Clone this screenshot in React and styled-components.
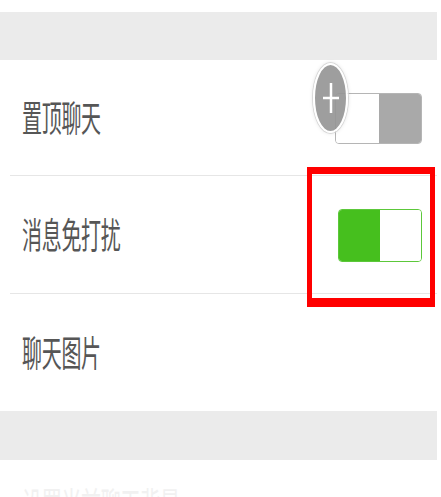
import React from "react";
import styled, { createGlobalStyle } from "styled-components";

const Global = createGlobalStyle`
  html, body { margin: 0; padding: 0; background: #ffffff; }
  body { font-family: "Noto Sans CJK SC", "Noto Sans", sans-serif; }
  #root { width: 441px; height: 497px; overflow: hidden; }
`;

const Page = styled.div`
  width: 437px;
  padding-top: 12px;
  background: #ffffff;
  display: flex;
  flex-direction: column;
`;

const GrayBand = styled.div`
  height: ${(p) => p.$h}px;
  background: #ebebeb;
`;

const Row = styled.div`
  position: relative;
  height: ${(p) => p.$h}px;
  display: flex;
  align-items: center;
  justify-content: space-between;
  padding: 0 15px 0 22px;
  box-sizing: border-box;
  background: #ffffff;
  &::after {
    content: "";
    display: ${(p) => (p.$line ? "block" : "none")};
    position: absolute;
    left: 10px;
    right: 0;
    bottom: 0;
    height: 1px;
    background: #e6e6e6;
  }
`;

const Label = styled.span`
  display: inline-block;
  font-size: 20px;
  line-height: 20px;
  color: ${(p) => (p.$faint ? "#f1f1f1" : "#565656")};
  letter-spacing: -0.3px;
  transform: scaleY(1.8);
  transform-origin: center;
`;

const FaintRow = styled.div`
  height: 60px;
  padding: 34px 0 0 22px;
  box-sizing: border-box;
`;

const Track = styled.div`
  width: ${(p) => p.$w}px;
  height: ${(p) => p.$h}px;
  display: flex;
  border-radius: 4px;
  overflow: hidden;
  box-sizing: border-box;
  border: 1px solid ${(p) => (p.$on ? "#5cc83a" : "#b5b5b5")};
  background: #ffffff;
`;

const Half = styled.div`
  flex: 1;
  background: ${(p) => p.$fill};
`;

const PlusCircle = styled.div`
  position: absolute;
  z-index: 2;
  left: 313px;
  top: 3px;
  width: 35px;
  height: 70px;
  border-radius: 50%;
  box-sizing: border-box;
  border: 2px solid #ffffff;
  background: rgba(150, 150, 150, 0.92);
  box-shadow: 0 0 0 1px #d8d8d8, 0 0 4px rgba(0, 0, 0, 0.15);
  display: flex;
  align-items: center;
  justify-content: center;
`;

const Highlight = styled.div`
  position: absolute;
  z-index: 3;
  left: 307px;
  top: -9px;
  width: 128px;
  height: 140px;
  box-sizing: border-box;
  border-style: solid;
  border-color: #ff0000;
  border-width: 7px 5px 9px 5px;
  pointer-events: none;
`;

export default function App() {
  return (
    <>
      <Global />
      <Page>
        <GrayBand $h={48} />
        <Row $h={116} $line>
          <Label>置顶聊天</Label>
          <Track $w={87} $h={51}>
            <Half $fill="#ffffff" />
            <Half $fill="#a9a9a9" />
          </Track>
          <PlusCircle>
            <svg width="18" height="36" viewBox="0 0 18 36">
              <path d="M9 3 V33 M1 18 H17" stroke="#ffffff" strokeWidth="2.5" fill="none" />
            </svg>
          </PlusCircle>
        </Row>
        <Row $h={118} $line>
          <Label>消息免打扰</Label>
          <Track $w={84} $h={53} $on>
            <Half $fill="#46bf1e" />
            <Half $fill="#ffffff" />
          </Track>
          <Highlight />
        </Row>
        <Row $h={117}>
          <Label>聊天图片</Label>
        </Row>
        <GrayBand $h={49} />
        <FaintRow>
          <Label $faint>设置当前聊天背景</Label>
        </FaintRow>
      </Page>
    </>
  );
}
